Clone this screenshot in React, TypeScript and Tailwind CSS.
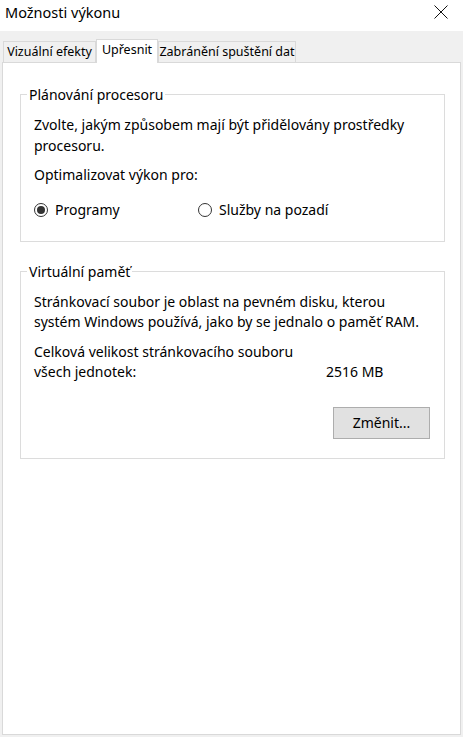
import React, { useState } from 'react';

const font = { fontFamily: '"Noto Sans", "Liberation Sans", sans-serif' };

const Radio: React.FC<{ checked: boolean; label: string; onClick: () => void; className?: string }> = ({ checked, label, onClick, className }) => (
  <label onClick={onClick} className={`flex items-center gap-[7px] cursor-default ${className || ''}`}>
    <span className="w-[14px] h-[14px] rounded-full border border-[#333] bg-white flex items-center justify-center">
      {checked && <span className="w-[8px] h-[8px] rounded-full bg-[#333]" />}
    </span>
    <span>{label}</span>
  </label>
);

const tabs = [
  { label: 'Vizuální efekty', w: 'w-[93px]' },
  { label: 'Upřesnit', w: 'w-[62px]' },
  { label: 'Zabránění spuštění dat', w: 'w-[138px]' },
];

const App: React.FC = () => {
  const [tab, setTab] = useState(1);
  const [target, setTarget] = useState<'programs' | 'services'>('programs');

  return (
    <div className="w-[463px] h-[737px] bg-[#f0f0f0] flex flex-col text-[14px] text-black" style={font}>
      {/* Title bar */}
      <div className="h-[31px] bg-white flex items-center justify-between pl-[5px] pr-[15px]">
        <span className="text-[14.5px] leading-none -mt-[6px]">Možnosti výkonu</span>
        <svg width="14" height="14" viewBox="0 0 14 14" className="-mt-[7px]">
          <path d="M0.5 0.5 L13.5 13.5 M13.5 0.5 L0.5 13.5" stroke="#111" strokeWidth="1" />
        </svg>
      </div>

      {/* Tabs */}
      <div className="flex items-end pl-[3px] pt-[8px] relative z-10 text-[12.5px]">
        {tabs.map((t, i) =>
          i === tab ? (
            <button
              key={t.label}
              onClick={() => setTab(i)}
              className={`${t.w} h-[24px] bg-white border border-[#d9d9d9] border-b-0 -mb-px pb-[3px] leading-none whitespace-nowrap`}
            >
              {t.label}
            </button>
          ) : (
            <button
              key={t.label}
              onClick={() => setTab(i)}
              className={`${t.w} h-[21px] bg-[#f0f0f0] border border-[#d9d9d9] border-b-0 leading-none whitespace-nowrap`}
            >
              {t.label}
            </button>
          )
        )}
      </div>

      {/* Panel */}
      <div className="flex-1 mx-[2px] mb-[2px] bg-white border border-[#d9d9d9] pt-[21px] pl-[17px] pr-[15px]">
        <fieldset className="border border-[#dcdcdc] pl-[13px] pr-[10px] pb-[21px] leading-[21px]">
          <legend className="-ml-[7px] px-[2px] leading-[21px]">Plánování procesoru</legend>
          <p className="mt-[9px]">Zvolte, jakým způsobem mají být přidělovány prostředky procesoru.</p>
          <p className="mt-[8px]">Optimalizovat výkon pro:</p>
          <div className="flex mt-[14px]">
            <Radio checked={target === 'programs'} label="Programy" onClick={() => setTarget('programs')} className="w-[164px]" />
            <Radio checked={target === 'services'} label="Služby na pozadí" onClick={() => setTarget('services')} />
          </div>
        </fieldset>

        <fieldset className="mt-[19px] border border-[#dcdcdc] pl-[13px] pr-[14px] pb-[19px] leading-[20px]">
          <legend className="-ml-[7px] px-[2px] leading-[21px]">Virtuální paměť</legend>
          <p className="mt-[10px]">Stránkovací soubor je oblast na pevném disku, kterou systém Windows používá, jako by se jednalo o paměť RAM.</p>
          <div className="mt-[10px] flex items-end">
            <p className="w-[292px]">Celková velikost stránkovacího souboru všech jednotek:</p>
            <span>2516 MB</span>
          </div>
          <div className="flex justify-end mt-[25px]">
            <button className="w-[97px] h-[32px] bg-[#e1e1e1] border border-[#adadad]">Změnit...</button>
          </div>
        </fieldset>
      </div>
    </div>
  );
};

export default App;
